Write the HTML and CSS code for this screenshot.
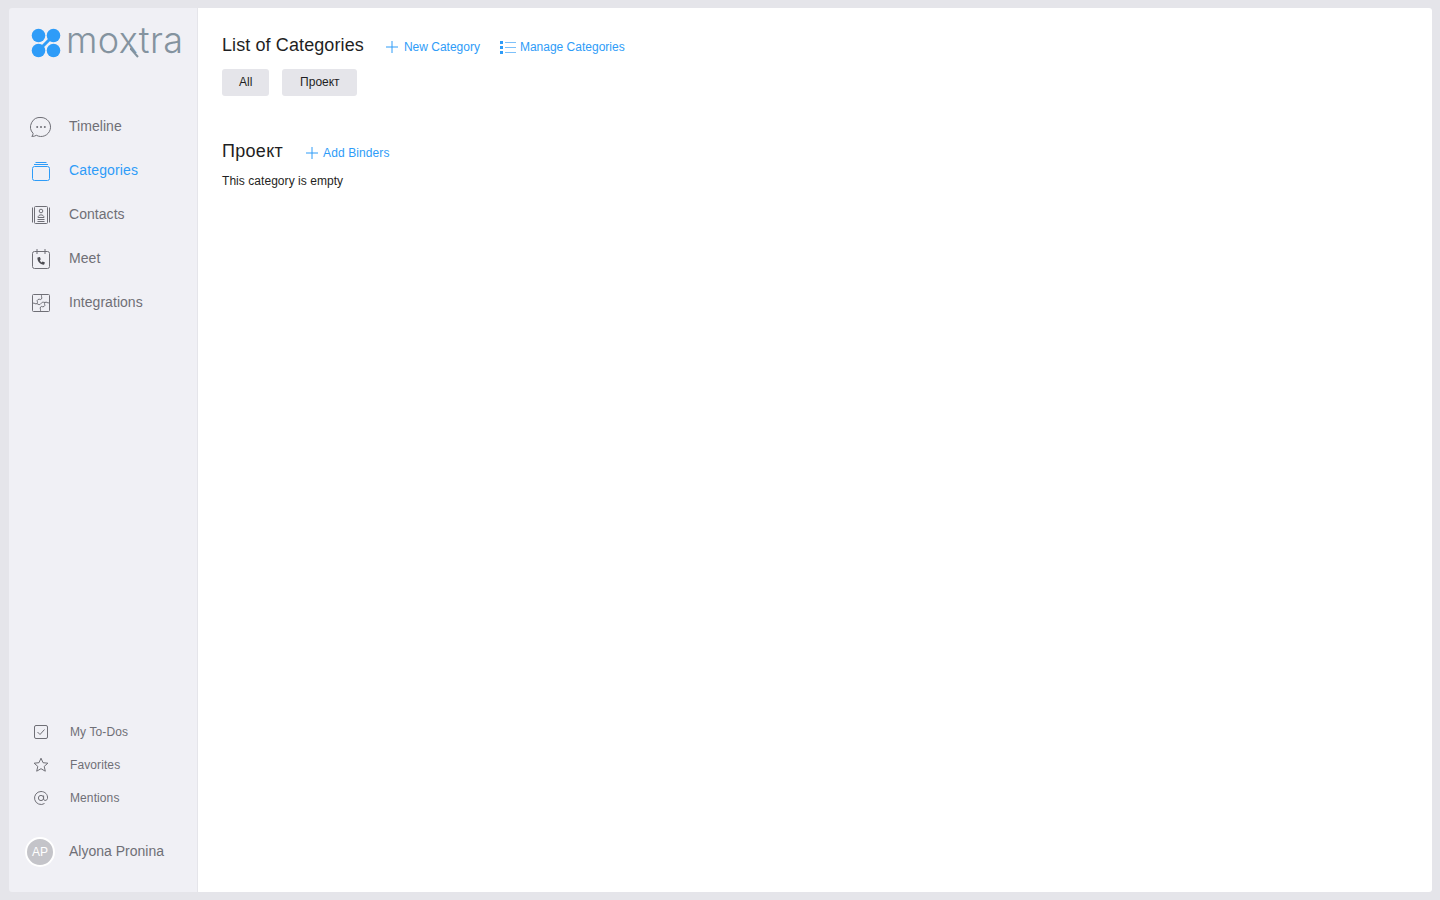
FILE: index.html
```html
<!DOCTYPE html>
<html lang="en">
<head>
<meta charset="utf-8">
<title>Moxtra</title>
<link rel="stylesheet" href="styles.css">
</head>
<body>
<div class="app">
  <aside class="sidebar">
    <div class="logo">
      <svg class="logo-mark" width="30" height="30" viewBox="0 0 30 30"><g fill="#2e9cf8"><circle cx="7.5" cy="7.5" r="6.8"/><circle cx="22.5" cy="7.5" r="6.8"/><circle cx="7.5" cy="22.5" r="6.8"/><circle cx="22.5" cy="22.5" r="6.8"/></g><path d="M7.500 22.500L22.500 7.500" stroke="#2e9cf8" stroke-width="3"/></svg>
      <span class="logo-text">moxtra</span>
      <svg class="logo-tail" width="10" height="10" viewBox="0 0 10 10"><path d="M0 0L8 9" stroke="#84939f" stroke-width="2" fill="none"/></svg>
    </div>
    <nav class="nav">
      <a class="nav-item">
        <svg class="nav-icon" width="22" height="22" viewBox="0 0 22 22" fill="none" stroke="#6f6f76" stroke-width="1"><path d="M11 1.500a9.500 9.500 0 1 1-4.600 17.800c-1.200.8-3 1.200-4.600 1.100.8-.8 1.300-1.800 1.300-3A9.500 9.500 0 0 1 11 1.500z"/><g fill="#6f6f76" stroke="none"><circle cx="7.200" cy="11" r="1"/><circle cx="11" cy="11" r="1"/><circle cx="14.800" cy="11" r="1"/></g></svg>
        <span>Timeline</span>
      </a>
      <a class="nav-item active">
        <svg class="nav-icon" width="22" height="22" viewBox="0 0 22 22" fill="none" stroke="#2e9cf8" stroke-width="1"><rect x="2.500" y="6.500" width="17" height="14" rx="2"/><path d="M4 4.500h14M5.500 2.500h11"/></svg>
        <span>Categories</span>
      </a>
      <a class="nav-item">
        <svg class="nav-icon" width="22" height="22" viewBox="0 0 22 22" fill="none" stroke="#6f6f76" stroke-width="1"><rect x="4.500" y="2.500" width="13" height="17" rx="1"/><path d="M2.500 3.500v15M19.500 3.500v15M7.500 15.500h7M7.500 17.500h7"/><circle cx="11" cy="7" r="1.800"/><path d="M8 13.500c0-3.500 6-3.500 6 0z"/></svg>
        <span>Contacts</span>
      </a>
      <a class="nav-item">
        <svg class="nav-icon" width="22" height="22" viewBox="0 0 22 22" fill="none" stroke="#6f6f76" stroke-width="1"><path d="M4.500 3.500h13a2 2 0 0 1 2 2v13a2 2 0 0 1-2 2h-13a2 2 0 0 1-2-2v-13a2 2 0 0 1 2-2z"/><path d="M7 1v5M15 1v5"/><path d="M7.500 9.500c-.6 3.600 2.400 7 6.500 7.200l1-2.100-2.400-1.200-1 1c-.9-.5-1.500-1.300-1.700-2.200l.9-.9-.9-2.200z" fill="#4c4c52" stroke="none"/></svg>
        <span>Meet</span>
      </a>
      <a class="nav-item">
        <svg class="nav-icon" width="22" height="22" viewBox="0 0 22 22" fill="none" stroke="#6f6f76" stroke-width="1"><rect x="2.500" y="2.500" width="17" height="17" rx="1"/><path d="M2.500 11.500c2-1.500 3 1.500 4.500 0s-1-3 1-4 2.500 1 3.500-.5-1-3 .5-4.500M19.500 10.500c-2 1.500-3-1.500-4.500 0s1 3-1 4-2.500-1-3.500.5 1 3-.5 4.500M7 11.500c1.500 1.500 3 1.500 4 0s2-1.500 4-1"/></svg>
        <span>Integrations</span>
      </a>
    </nav>
    <div class="shortcuts">
      <a class="short-item">
        <svg class="short-icon" width="16" height="16" viewBox="0 0 16 16" fill="none" stroke="#6f6f76" stroke-width="1"><rect x="1.500" y="1.500" width="13" height="13" rx="1.500"/><path d="M4.500 8l2.500 2.500 4.500-5"/></svg>
        <span>My To-Dos</span>
      </a>
      <a class="short-item">
        <svg class="short-icon" width="16" height="16" viewBox="0 0 16 16" fill="none" stroke="#6f6f76" stroke-width="1"><path d="M8 1.200l2 4.500 4.900.5-3.700 3.200 1.100 4.800L8 11.700l-4.300 2.500 1.100-4.800L1.100 6.200 6 5.700z" stroke-linejoin="round"/></svg>
        <span>Favorites</span>
      </a>
      <a class="short-item">
        <svg class="short-icon" width="16" height="16" viewBox="0 0 16 16" fill="none" stroke="#6f6f76" stroke-width="1"><circle cx="8" cy="8" r="2.600"/><path d="M10.600 5.500v3.500c0 2 3.400 2 3.900-.5C15 4.500 12 1.500 8 1.500a6.500 6.500 0 1 0 3.500 12"/></svg>
        <span>Mentions</span>
      </a>
    </div>
    <div class="user">
      <div class="avatar">AP</div>
      <span class="user-name">Alyona Pronina</span>
    </div>
  </aside>
  <main class="main">
    <header class="head-row">
      <h1 class="title">List of Categories</h1>
      <a class="link">
        <svg width="12" height="12" viewBox="0 0 12 12" stroke="#2e9cf8" stroke-width="1"><path d="M6 0v12M0 6h12"/></svg>
        <span>New Category</span>
      </a>
      <a class="link link-manage">
        <svg width="16" height="15" viewBox="0 0 16 15"><g fill="#2e9cf8"><rect x="0" y="1" width="3" height="3"/><rect x="0" y="6" width="3" height="3"/><rect x="0" y="11" width="3" height="3"/></g><path d="M5 2.500h11M5 7.500h11M5 12.500h11" stroke="#7cc0fa" stroke-width="1"/></svg>
        <span>Manage Categories</span>
      </a>
    </header>
    <div class="tabs">
      <button class="tab">All</button>
      <button class="tab tab-wide">Проект</button>
    </div>
    <section class="section">
      <div class="head-row section-head">
        <h2 class="title title-section">Проект</h2>
        <a class="link link-binders">
          <svg width="12" height="12" viewBox="0 0 12 12" stroke="#2e9cf8" stroke-width="1"><path d="M6 0v12M0 6h12"/></svg>
          <span>Add Binders</span>
        </a>
      </div>
      <p class="empty">This category is empty</p>
    </section>
  </main>
</div>
</body>
</html>
```
FILE: styles.css
```css
* { box-sizing: border-box; }
html, body { height: 100%; }
body {
  margin: 0;
  background: #e5e5ea;
  font-family: "Liberation Sans", Arial, sans-serif;
  color: #1f1f23;
}
.app {
  display: flex;
  height: 900px;
  padding: 8px 8px 8px 9px;
}
.sidebar {
  width: 188px;
  background: #f0f0f5;
  border-radius: 3px 0 0 3px;
  display: flex;
  flex-direction: column;
  flex: none;
}
.main {
  margin-left: 1px;
  flex: 1;
  background: #fff;
  border-radius: 0 3px 3px 0;
  padding: 25px 24px;
}
.logo {
  position: relative;
  display: flex;
  align-items: center;
  padding: 19px 0 0 22px;
  height: 50px;
  gap: 5px;
}
.logo-mark { flex: none; }
.logo-text {
  font-family: "Inter", "Liberation Sans", sans-serif;
  font-size: 36px;
  font-weight: 300;
  line-height: 30px;
  color: #84939f;
  letter-spacing: 0.4px;
  position: relative;
  top: -3px;
}
.logo-tail {
  position: absolute;
  left: 121px;
  top: 40px;
}
.nav {
  margin-top: 46px;
  display: flex;
  flex-direction: column;
}
.nav-item {
  height: 44px;
  display: flex;
  align-items: center;
  padding-left: 21px;
  font-size: 14px;
  letter-spacing: 0.05px;
  color: #6f6f76;
  gap: 17px;
}
.nav-item.active { color: #2e9cf8; letter-spacing: 0.15px; }
.nav-icon { flex: none; position: relative; top: 1px; }
.shortcuts {
  margin-top: auto;
  display: flex;
  flex-direction: column;
}
.short-item {
  height: 33px;
  display: flex;
  align-items: center;
  padding-left: 24px;
  font-size: 12px;
  letter-spacing: 0.1px;
  color: #6f6f76;
  gap: 21px;
}
.short-icon { flex: none; }
.user {
  margin: 23px 0 25px 16px;
  height: 30px;
  display: flex;
  align-items: center;
  gap: 14px;
  font-size: 14px;
  color: #6f6f76;
}
.user-name { position: relative; top: -1px; }
.avatar {
  width: 30px;
  height: 30px;
  border-radius: 50%;
  background: #c4c4c9;
  border: 2px solid #fff;
  color: #fff;
  font-size: 12px;
  display: flex;
  align-items: center;
  justify-content: center;
}
.head-row {
  display: flex;
  align-items: center;
  height: 24px;
}
.title {
  margin: 0;
  font-size: 18px;
  font-weight: 400;
  line-height: 24px;
  letter-spacing: 0.1px;
  color: #1f1f23;
}
.title-section { letter-spacing: 0.3px; }
.link {
  display: flex;
  align-items: center;
  gap: 6px;
  margin-left: 22px;
  font-size: 12px;
  color: #2e9cf8;
  position: relative;
  top: 2px;
}
.link-manage { margin-left: 20px; gap: 4px; }
.link-binders { margin-left: 23px; gap: 5px; letter-spacing: 0.1px; }
.tabs {
  margin-top: 12px;
  display: flex;
  gap: 13px;
}
.tab {
  height: 27px;
  padding: 0 17px 2px;
  border: 0;
  border-radius: 3px;
  background: #e5e5ea;
  font: 400 12px "Liberation Sans", Arial, sans-serif;
  color: #1f1f23;
}
.tab-wide { min-width: 75px; }
.section { margin-top: 43px; }
.empty {
  margin: 10px 0 0;
  font-size: 12px;
  line-height: 16px;
  letter-spacing: 0.05px;
  color: #1f1f23;
}
```
